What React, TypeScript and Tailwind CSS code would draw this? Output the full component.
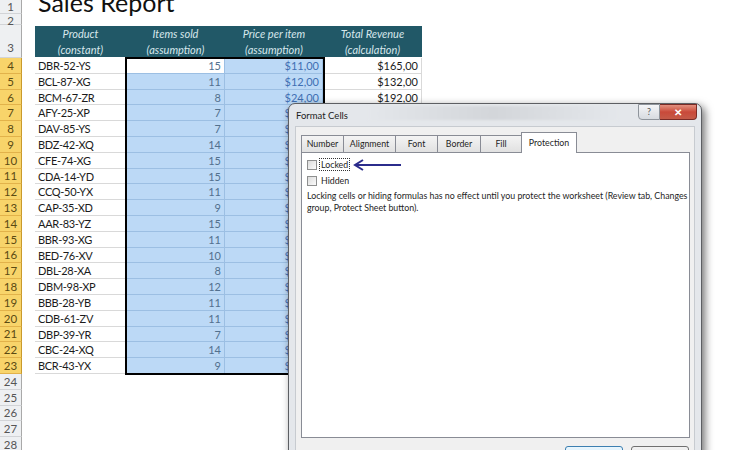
const rows = [
  ['DBR-52-YS', 15, '$11,00', '$165,00'],
  ['BCL-87-XG', 11, '$12,00', '$132,00'],
  ['BCM-67-ZR', 8, '$24,00', '$192,00'],
  ['AFY-25-XP', 7, '$18,00', '$126,00'],
  ['DAV-85-YS', 7, '$21,00', '$147,00'],
  ['BDZ-42-XQ', 14, '$10,00', '$140,00'],
  ['CFE-74-XG', 15, '$13,00', '$195,00'],
  ['CDA-14-YD', 15, '$16,00', '$240,00'],
  ['CCQ-50-YX', 11, '$22,00', '$242,00'],
  ['CAP-35-XD', 9, '$19,00', '$171,00'],
  ['AAR-83-YZ', 15, '$12,00', '$180,00'],
  ['BBR-93-XG', 11, '$14,00', '$154,00'],
  ['BED-76-XV', 10, '$25,00', '$250,00'],
  ['DBL-28-XA', 8, '$17,00', '$136,00'],
  ['DBM-98-XP', 12, '$11,00', '$132,00'],
  ['BBB-28-YB', 11, '$20,00', '$220,00'],
  ['CDB-61-ZV', 11, '$15,00', '$165,00'],
  ['DBP-39-YR', 7, '$23,00', '$161,00'],
  ['CBC-24-XQ', 14, '$12,00', '$168,00'],
  ['BCR-43-YX', 9, '$18,00', '$162,00'],
] as const;

const tabs = ['Number', 'Alignment', 'Font', 'Border', 'Fill'];
const tabWidths = ['w-[43px]', 'w-[53px]', 'w-[43px]', 'w-[44px]', 'w-[42px]'];

function RowHead({ n, active, className }: { n: number; active?: boolean; className?: string }) {
  return (
    <div
      className={`w-[22px] shrink-0 flex justify-center border-r border-b text-[11.5px] ${
        active
          ? 'bg-[#f8d46a] border-r-[#c99a2c] border-b-[#e2b24a] text-[#5b4a12]'
          : 'bg-[#eef0f2] border-r-[#a9a9a9] border-b-[#d2d4d7] text-[#555]'
      } ${className ?? 'items-center'}`}
    >
      {n}
    </div>
  );
}

function Sheet() {
  return (
    <div className="flex flex-col font-['Lato',sans-serif] text-[11px] text-[#1b1b1b]">
      <div className="flex h-[14px]">
        <RowHead n={1} />
        <div className="w-[16px]" />
        <div className="-mt-[10px] text-[25px] leading-[25px] text-[#111] whitespace-nowrap">Sales Report</div>
      </div>
      <div className="flex h-[11px] overflow-hidden">
        <RowHead n={2} className="items-start leading-[14px]" />
      </div>
      <div className="flex h-[33px]">
        <RowHead n={3} className="items-end pb-[1px]" />
        <div className="w-[13px]" />
        <div className="flex mt-[1px] h-[31px] bg-[#215867] text-[#d7e7ec] italic leading-[16px] text-center">
          <div className="w-[91px] flex flex-col justify-center">
            <span>Product</span>
            <span>(constant)</span>
          </div>
          <div className="w-[99px] flex flex-col justify-center">
            <span>Items sold</span>
            <span>(assumption)</span>
          </div>
          <div className="w-[98px] flex flex-col justify-center">
            <span>Price per item</span>
            <span>(assumption)</span>
          </div>
          <div className="w-[99px] flex flex-col justify-center">
            <span>Total Revenue</span>
            <span>(calculation)</span>
          </div>
        </div>
      </div>
      {rows.map(([code, qty, price, total], i) => (
        <div key={code} className="flex h-[15.8px] leading-[15px]">
          <RowHead n={i + 4} active />
          <div className="w-[13px]" />
          <div className="w-[91px] pl-[3px] tracking-[-0.3px] border-b border-r border-[#d9d9d9]">{code}</div>
          <div
            className={`w-[99px] text-right pr-[3px] text-[#52708e] border-b border-r border-[#9cbfe3] ${
              i === 0 ? 'bg-white' : 'bg-[#bcd9f6]'
            }`}
          >
            {qty}
          </div>
          <div className="w-[98px] text-right pr-[3px] text-[#3f6fb3] bg-[#bcd9f6] border-b border-r border-[#9cbfe3]">
            {price}
          </div>
          <div className="w-[99px] text-right pr-[3px] border-b border-r border-[#d9d9d9]">{total}</div>
        </div>
      ))}
      {[24, 25, 26, 27, 28].map((n) => (
        <div key={n} className="flex h-[15.8px]">
          <RowHead n={n} />
        </div>
      ))}
    </div>
  );
}

function Dialog() {
  return (
    <div className="absolute left-[288px] top-[103px] w-[414px] h-[360px] rounded-t-[7px] border border-[#5d5f63] bg-[#e4e7eb] shadow-[3px_3px_8px_rgba(0,0,0,0.55)] font-['Lato',sans-serif] text-[8.8px] text-[#1e1e1e]">
      <div className="flex h-[22px] items-start">
        <div className="pl-[7px] pt-[5px] text-[9.5px] text-[#222]">Format Cells</div>
        <div className="flex-1 h-[14px] mt-[2px] mx-[20px] bg-gradient-to-r from-[#e4e7eb] via-[#d3d6da] to-[#e4e7eb] blur-[1px]" />
        <div className="flex mr-[4px]">
          <div className="w-[22px] h-[16px] rounded-bl-[4px] border border-[#8f959c] bg-gradient-to-b from-[#f4f5f7] to-[#d7dbe0] flex items-center justify-center text-[9px] text-[#555]">
            ?
          </div>
          <div className="w-[37px] h-[16px] rounded-br-[4px] border border-l-0 border-[#7a2a25] bg-gradient-to-b from-[#e2907f] via-[#c9493a] to-[#c45a48] flex items-center justify-center text-[10px] font-bold text-white">
            ✕
          </div>
        </div>
      </div>
      <div className="mx-[6px] h-[331px] bg-[#f0f0f0] border border-[#c7cbd0] pt-[4px] px-[5px]">
        <div className="flex items-end h-[21px]">
          {tabs.map((t, i) => (
            <div
              key={t}
              className={`${tabWidths[i]} h-[17px] border border-b-0 border-[#898c95] -ml-px first:ml-0 bg-gradient-to-b from-[#f4f4f4] to-[#e1e1e1] flex items-center justify-center`}
            >
              {t}
            </div>
          ))}
          <div className="w-[56px] h-[21px] -ml-px -mb-px relative border border-b-0 border-[#898c95] bg-white flex items-center justify-center">
            Protection
          </div>
        </div>
        <div className="w-[389px] h-[286px] bg-white border border-[#898c95] px-[5px] pt-[5px]">
          <div className="flex items-center h-[13px]">
            <div className="w-[10px] h-[10px] border border-[#8e8f8f] bg-gradient-to-br from-[#dcdcdc] to-[#fbfbfb]" />
            <div className="ml-[2px] px-[1px] border border-dotted border-[#333] leading-[11px]">Locked</div>
            <svg width="50" height="12" viewBox="0 0 50 12" className="ml-[3px]">
              <path d="M3 6 H48" stroke="#2b2c8c" strokeWidth="2" />
              <path d="M10 1 L2 6 L10 11" stroke="#2b2c8c" strokeWidth="2" fill="none" />
            </svg>
          </div>
          <div className="flex items-center h-[13px] mt-[3px]">
            <div className="w-[10px] h-[10px] border border-[#8e8f8f] bg-gradient-to-br from-[#dcdcdc] to-[#fbfbfb]" />
            <div className="ml-[4px]">Hidden</div>
          </div>
          <p className="mt-[3px] leading-[12px] w-[385px]">
            Locking cells or hiding formulas has no effect until you protect the worksheet (Review tab, Changes
            group, Protect Sheet button).
          </p>
        </div>
        <div className="flex justify-end gap-[8px] mt-[8px]">
          <div className="w-[58px] h-[22px] rounded-[3px] border border-[#3c7fb1] bg-gradient-to-b from-[#eaf6fd] to-[#bee6fd]" />
          <div className="w-[58px] h-[22px] rounded-[3px] border border-[#707070] bg-gradient-to-b from-[#f2f2f2] to-[#dddddd]" />
        </div>
      </div>
    </div>
  );
}

export default function App() {
  return (
    <div className="relative w-[750px] h-[450px] overflow-hidden bg-white">
      <Sheet />
      <div className="absolute left-[125px] top-[57px] w-[200px] h-[318px] border-2 border-black pointer-events-none" />
      <Dialog />
    </div>
  );
}
